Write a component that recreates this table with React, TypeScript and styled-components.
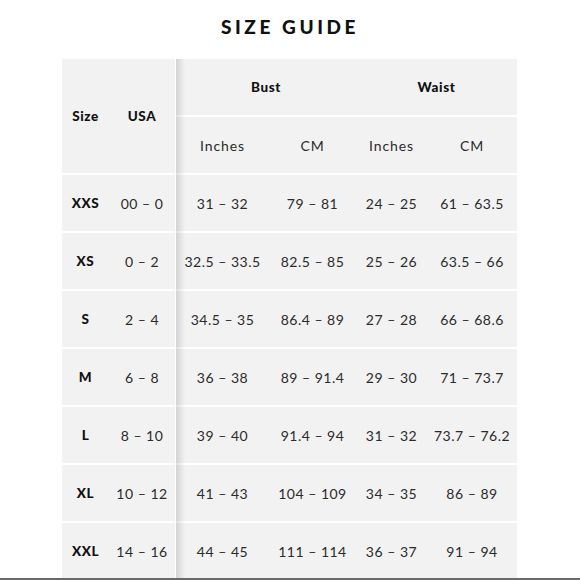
import styled, { createGlobalStyle } from 'styled-components';

const GlobalStyle = createGlobalStyle`
  html, body {
    margin: 0;
    padding: 0;
    background: #ffffff;
  }
  body {
    font-family: 'Lato', 'Liberation Sans', sans-serif;
    color: #1a1a1a;
  }
`;

const Page = styled.div`
  display: flex;
  flex-direction: column;
  width: 580px;
  height: 580px;
  overflow: hidden;
`;

const Title = styled.h1`
  margin: 0;
  padding: 16px 0 0;
  height: 59px;
  flex-shrink: 0;
  box-sizing: border-box;
  text-align: center;
  font-size: 19px;
  line-height: 22px;
  font-weight: 900;
  letter-spacing: 3.6px;
  color: #111;
`;

const TableArea = styled.section`
  flex: 1;
  min-height: 0;
  display: flex;
  align-items: flex-start;
  padding-left: 62px;
  overflow: hidden;
`;

const Frozen = styled.div`
  display: grid;
  grid-template-columns: 47px 66px;
  grid-template-rows: 114px;
  grid-auto-rows: 56px;
  row-gap: 2px;
  margin-right: 1px;
  background: #ffffff;
`;

const Scroller = styled.div`
  position: relative;
  display: grid;
  grid-template-columns: 93px 87px 71px 90px;
  grid-auto-rows: 56px;
  row-gap: 2px;
  background: #ffffff;

  &::before {
    content: '';
    position: absolute;
    top: 0;
    bottom: 0;
    left: 0;
    width: 9px;
    background: linear-gradient(to right, rgba(0, 0, 0, 0.13), rgba(0, 0, 0, 0));
    pointer-events: none;
    z-index: 1;
  }
`;

const Cell = styled.div<{ $bold?: boolean; $span?: number; $unit?: boolean }>`
  display: flex;
  align-items: center;
  justify-content: center;
  background: #f2f2f2;
  grid-column: ${(p) => (p.$span ? `span ${p.$span}` : 'auto')};
  font-size: ${(p) => (p.$bold ? '13.5px' : '14px')};
  font-weight: ${(p) => (p.$bold ? 900 : 400)};
  letter-spacing: ${(p) => (p.$unit ? '0.9px' : p.$bold ? '0.6px' : '0.5px')};
  color: ${(p) => (p.$bold ? '#111' : '#2b2b2b')};
  white-space: nowrap;
`;

const BottomRule = styled.div`
  height: 2px;
  flex-shrink: 0;
  background: #6a6a6a;
`;

interface ISizeRow {
  size: string;
  usa: string;
  bustIn: string;
  bustCm: string;
  waistIn: string;
  waistCm: string;
}

const rows: ISizeRow[] = [
  { size: 'XXS', usa: '00 – 0', bustIn: '31 – 32', bustCm: '79 – 81', waistIn: '24 – 25', waistCm: '61 – 63.5' },
  { size: 'XS', usa: '0 – 2', bustIn: '32.5 – 33.5', bustCm: '82.5 – 85', waistIn: '25 – 26', waistCm: '63.5 – 66' },
  { size: 'S', usa: '2 – 4', bustIn: '34.5 – 35', bustCm: '86.4 – 89', waistIn: '27 – 28', waistCm: '66 – 68.6' },
  { size: 'M', usa: '6 – 8', bustIn: '36 – 38', bustCm: '89 – 91.4', waistIn: '29 – 30', waistCm: '71 – 73.7' },
  { size: 'L', usa: '8 – 10', bustIn: '39 – 40', bustCm: '91.4 – 94', waistIn: '31 – 32', waistCm: '73.7 – 76.2' },
  { size: 'XL', usa: '10 – 12', bustIn: '41 – 43', bustCm: '104 – 109', waistIn: '34 – 35', waistCm: '86 – 89' },
  { size: 'XXL', usa: '14 – 16', bustIn: '44 – 45', bustCm: '111 – 114', waistIn: '36 – 37', waistCm: '91 – 94' },
];

const App = () => {
  return (
    <Page>
      <GlobalStyle />
      <Title>SIZE GUIDE</Title>
      <TableArea>
        <Frozen>
          <Cell $bold>Size</Cell>
          <Cell $bold>USA</Cell>
          {rows.map((row) => (
            <>
              <Cell key={`${row.size}-s`} $bold>
                {row.size}
              </Cell>
              <Cell key={`${row.size}-u`}>{row.usa}</Cell>
            </>
          ))}
        </Frozen>
        <Scroller>
          <Cell $bold $span={2}>
            Bust
          </Cell>
          <Cell $bold $span={2}>
            Waist
          </Cell>
          <Cell $unit>Inches</Cell>
          <Cell $unit>CM</Cell>
          <Cell $unit>Inches</Cell>
          <Cell $unit>CM</Cell>
          {rows.map((row) => (
            <>
              <Cell key={`${row.size}-bi`}>{row.bustIn}</Cell>
              <Cell key={`${row.size}-bc`}>{row.bustCm}</Cell>
              <Cell key={`${row.size}-wi`}>{row.waistIn}</Cell>
              <Cell key={`${row.size}-wc`}>{row.waistCm}</Cell>
            </>
          ))}
        </Scroller>
      </TableArea>
      <BottomRule />
    </Page>
  );
};

export default App;
